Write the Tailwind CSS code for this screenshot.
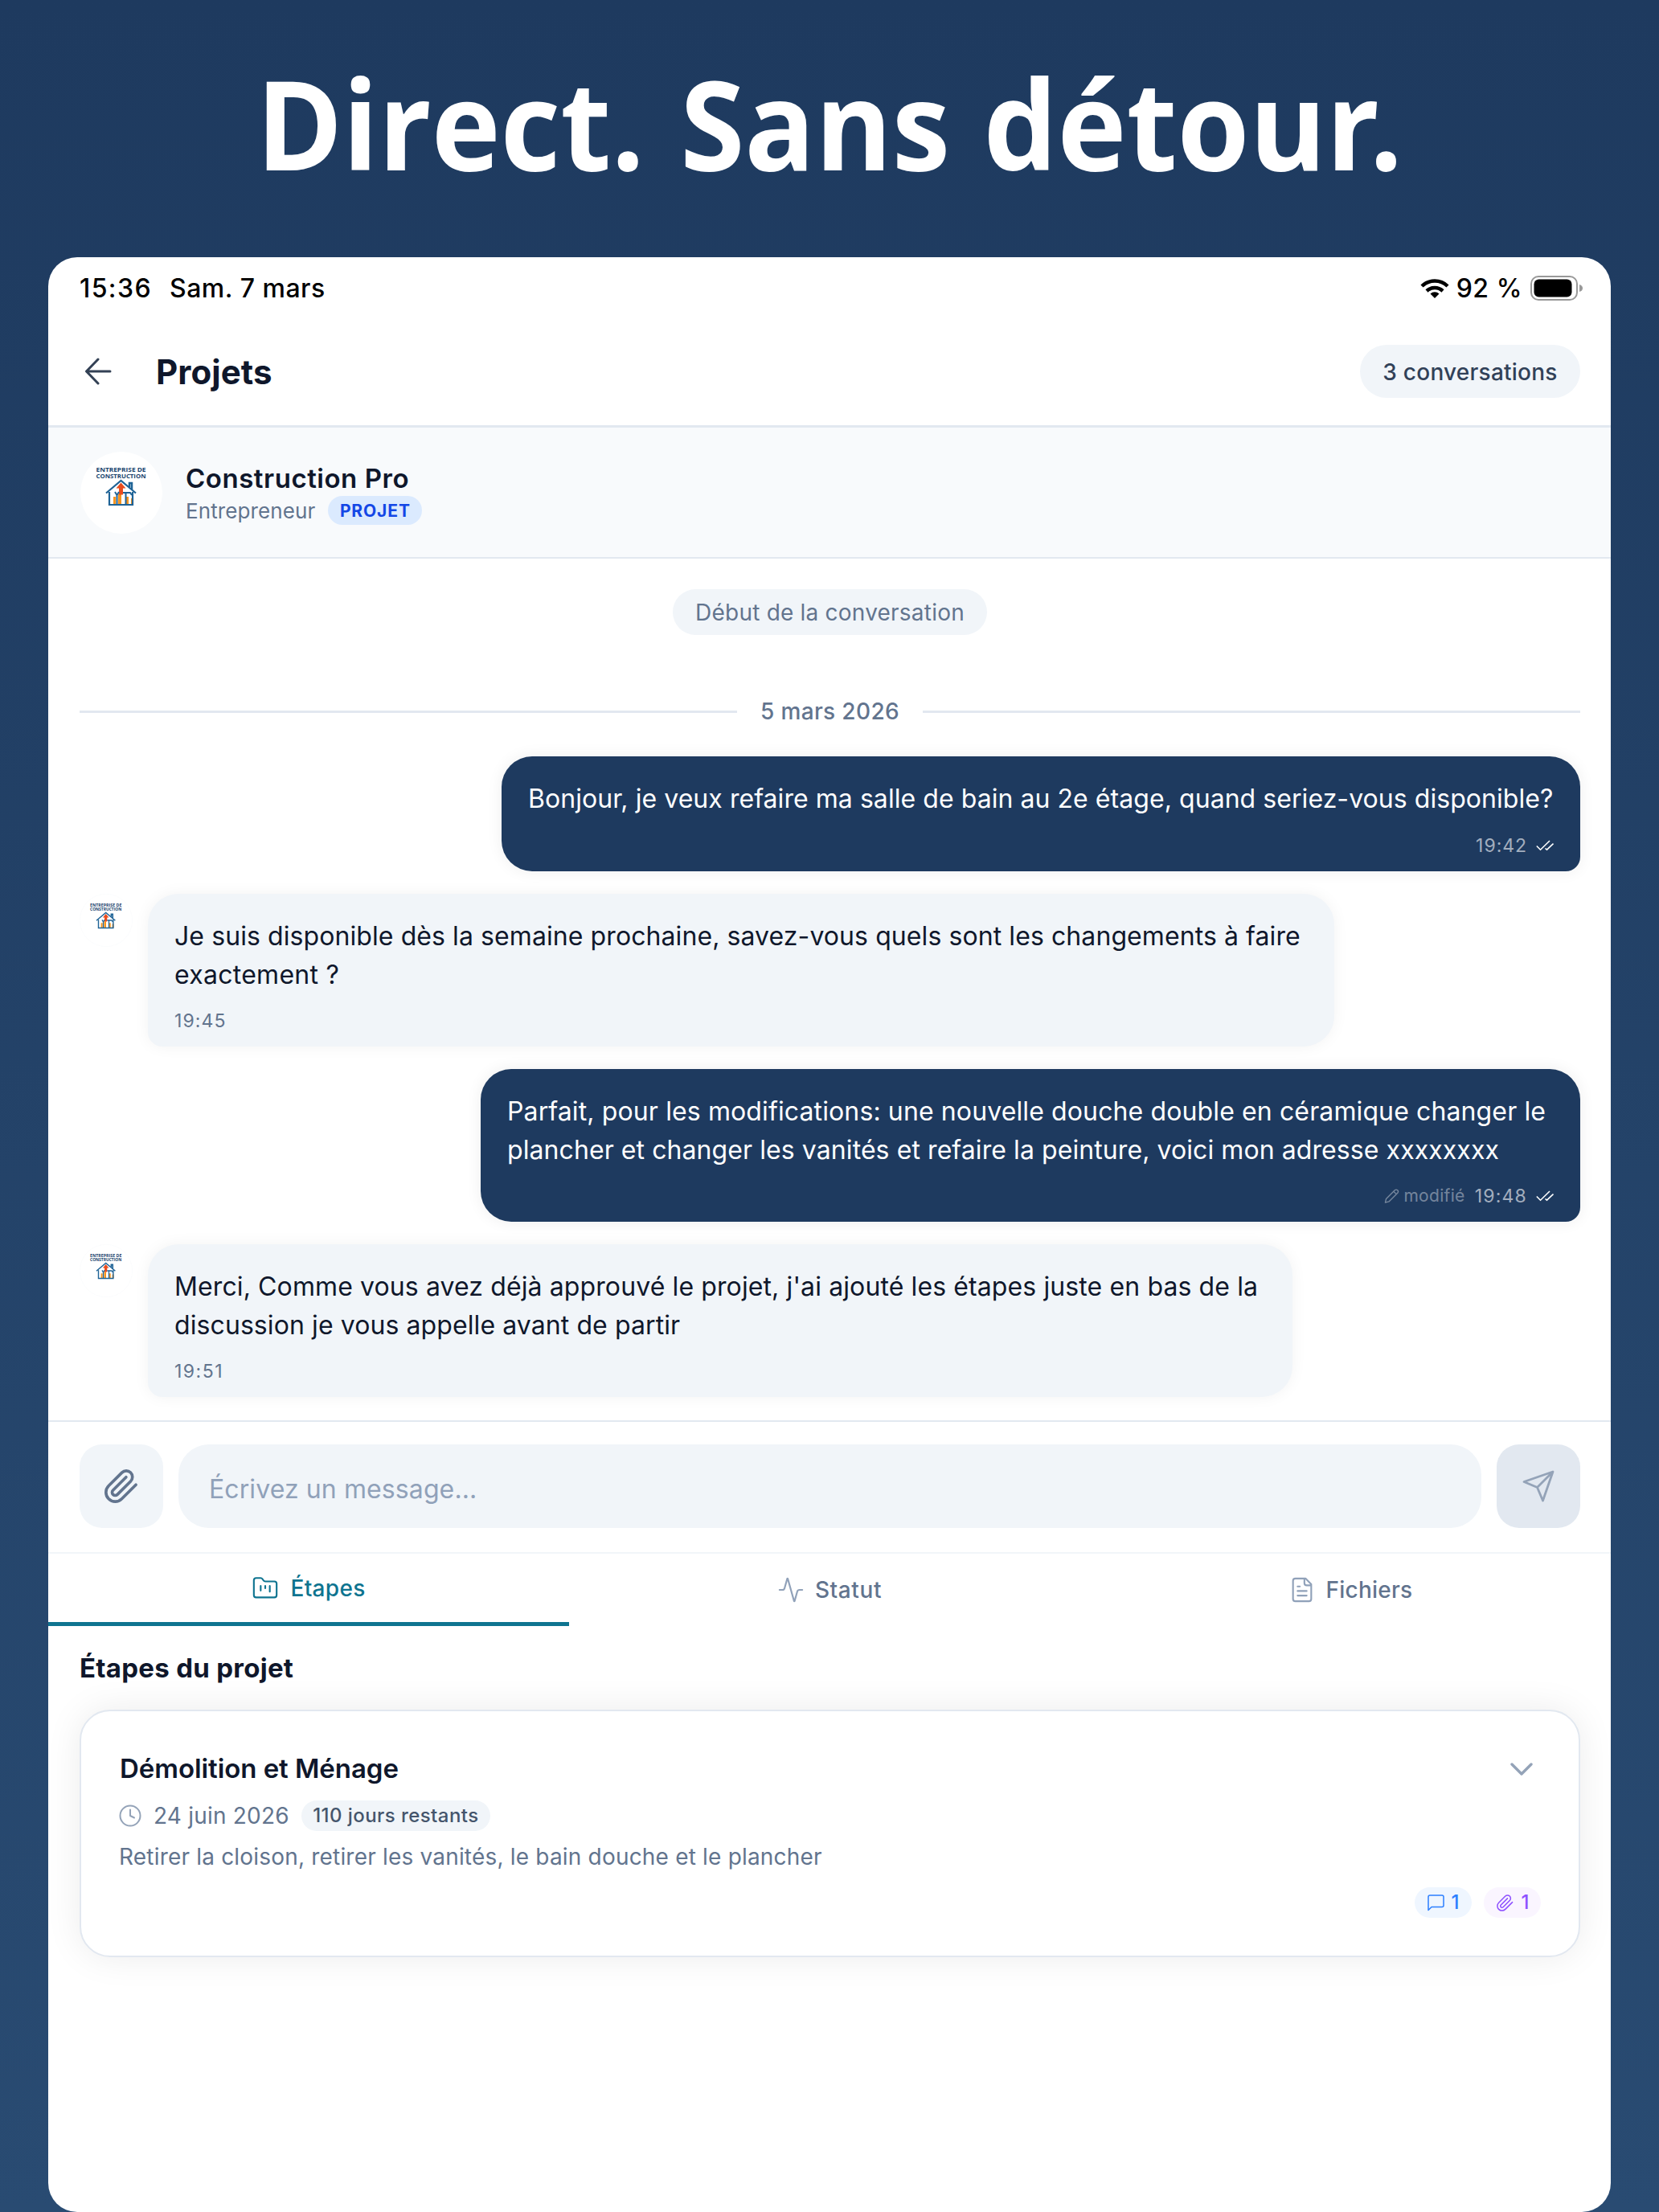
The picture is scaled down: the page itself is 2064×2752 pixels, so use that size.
<!DOCTYPE html>
<html lang="fr">
<head>
  <meta charset="UTF-8" />
  <meta name="viewport" content="width=device-width, initial-scale=1.0" />
  <title>Projets | Conversation</title>
  <script src="https://cdn.jsdelivr.net/npm/@tailwindcss/browser@4"></script>
</head>
<body class="w-[2064px] h-[2752px] overflow-hidden bg-linear-to-b from-[#1e3a5f] to-[#294b72] font-[Inter,sans-serif] text-slate-900">

<!-- Shared symbols -->
<svg class="hidden">
  <symbol id="logo" viewBox="0 0 104 104">
    <circle cx="52" cy="52" r="51.5" fill="#fff" stroke="#f8fafc" />
    <g font-family="Open Sans, sans-serif" font-weight="700" font-size="7.6" fill="#17426b" text-anchor="middle">
      <text x="51.5" y="25.5" textLength="62" lengthAdjust="spacingAndGlyphs">ENTREPRISE DE</text>
      <text x="51.5" y="33.5" textLength="62" lengthAdjust="spacingAndGlyphs">CONSTRUCTION</text>
    </g>
    <path d="M62 45v-5h3v8" fill="none" stroke="#1f6396" stroke-width="2.5" />
    <path d="M42 66v-9h3v9zM48 66v-12h4v12zM58 66v-9h3v9zM64 66v-7h3v7z" fill="#f7941e" />
    <path d="M51.5 39.5l6 7h-3.5v8h-5v-8h-3.5z" fill="#ea4c1d" />
    <path d="M33 52.5L51.5 37L70 52.5M37 51v16h29v-16" fill="none" stroke="#1f6396" stroke-width="2.2" />
    <path d="M46.5 66V55l-2.5-4M46.5 55l2.5-4M57.5 66V52M54 52h9l2 3" fill="none" stroke="#1f6396" stroke-width="2" />
  </symbol>
  <symbol id="clip" viewBox="0 0 24 24">
    <path d="m21.44 11.05-9.19 9.19a6 6 0 0 1-8.49-8.49l8.57-8.57A4 4 0 1 1 18 8.84l-8.59 8.57a2 2 0 0 1-2.83-2.83l8.49-8.48" fill="none" stroke="currentColor" stroke-linecap="round" stroke-linejoin="round" />
  </symbol>
  <symbol id="checks" viewBox="0 0 22 14">
    <path d="M.8 7.5L5.5 12.2L17 1M11.5 10.5L13.5 12.2L21.5 4.5" fill="none" stroke="#fff" stroke-width="1.6" />
  </symbol>
</svg>

<h1 class="h-[320px] pt-[47px] text-center text-[154px] leading-[210px] font-bold font-['Open_Sans',sans-serif] text-white whitespace-nowrap scale-x-[0.944]">Direct. <span class="ml-[7px]">Sans</span> <span class="ml-[4px]">détou<span class="tracking-[-13px]">r</span>.</span></h1>

<main class="mx-[60px] h-[2432px] rounded-[36px] bg-white overflow-hidden whitespace-nowrap">

  <!-- Status bar -->
  <div class="flex items-center h-[78px] pl-[39px] pr-[34px] text-[32px] font-medium text-black">
    <span class="tracking-[1.4px]">15:36</span>
    <span class="ml-[22px] tracking-[0.5px]">Sam. 7 mars</span>
    <svg class="ml-auto w-[36px] h-[26px]" viewBox="0 0 36 26">
      <g fill="none" stroke="#000" stroke-width="4.5">
        <path d="M2 10a23 23 0 0 1 32 0" />
        <path d="M8 16a14.5 14.5 0 0 1 20 0" />
      </g>
      <path d="M18 25l-5.5-5.5a8 8 0 0 1 11 0z" />
    </svg>
    <span class="ml-[9px] tracking-[0.53px]">92 %</span>
    <svg class="ml-[10px] w-[66px] h-[32px]" viewBox="0 0 66 32">
      <rect x="1" y="1" width="57" height="29" rx="9" fill="none" stroke="#999" stroke-width="2" />
      <rect x="4.5" y="4.5" width="47" height="22" rx="6" />
      <path d="M61 11q4 1 4 4.5t-4 4.5z" fill="#999" />
    </svg>
  </div>

  <!-- Header -->
  <header class="flex items-center h-[134px] px-[38px] pb-[3px] border-b-[3px] border-slate-200">
    <svg class="ml-[7px] w-[34px] h-[34px]" viewBox="0 0 34 34" fill="none" stroke="#334155" stroke-width="3" stroke-linecap="round" stroke-linejoin="round">
      <path d="M32 17H3M17 2L2.5 17L17 32" />
    </svg>
    <h2 class="ml-[55px] pt-px text-[42px] font-bold tracking-[0.08px]">Projets</h2>
    <span class="ml-auto w-[274px] h-[66px] rounded-full bg-slate-100 flex items-center justify-center pt-[2px] text-[28px] font-medium text-slate-700 tracking-[0.24px]">3 conversations</span>
  </header>

  <!-- Contact -->
  <section class="flex items-center h-[163px] pl-[39px] bg-slate-50 border-b-[2px] border-slate-200">
    <svg class="w-[104px] h-[104px]"><use href="#logo" /></svg>
    <div class="ml-[28px] pt-[3px]">
      <div class="text-[33px] leading-[42px] font-semibold tracking-[0.53px]">Construction Pro</div>
      <div class="flex items-center text-[26px] leading-[39px] text-slate-500">
        <span class="tracking-[0.1px]">Entrepreneur</span>
        <span class="ml-[16px] w-[117px] h-[36px] rounded-full bg-blue-100 flex items-center justify-center text-[21px] font-bold text-blue-700 tracking-[0.88px]">PROJET</span>
      </div>
    </div>
  </section>

  <!-- Messages -->
  <section class="flex flex-col h-[1074px] pl-[39px] pr-[38px] border-b-[2px] border-slate-200">
    <div class="mt-[38px] self-center w-[391px] h-[57px] rounded-full bg-slate-100 flex items-center justify-center pt-px text-[28px] text-slate-500 tracking-[0.21px]">Début de la conversation</div>
    <div class="mt-[76px] flex items-center gap-[29px] h-[38px] text-[28px] font-medium text-slate-500">
      <div class="flex-1 h-[3px] bg-slate-200"></div>
      <span class="tracking-[0.35px]">5 mars 2026</span>
      <div class="flex-1 h-[3px] bg-slate-200"></div>
    </div>

    <div class="mt-[37px] self-end w-[1342px] h-[143px] px-[33px] pt-[29px] rounded-[38px] rounded-br-[18px] bg-[#1e3a5f] shadow-[0_0_19px_rgba(0,0,0,0.07)] text-[32px] leading-[47.5px] text-white">
      <p class="tracking-[0.055px]">Bonjour, je veux refaire ma salle de bain au 2e étage, quand seriez-vous disponible?</p>
      <div class="mt-[19px] flex items-center justify-end text-[23px] leading-[30px] text-white/60">
        <span class="tracking-[0.95px]">19:42</span>
        <svg class="ml-[11px] w-[22px] h-[14px]"><use href="#checks" /></svg>
      </div>
    </div>

    <div class="mt-[28px] flex">
      <svg class="w-[66px] h-[66px]"><use href="#logo" /></svg>
      <div class="ml-[19px] w-[1476px] h-[190px] px-[33px] pt-[29px] rounded-[38px] rounded-bl-[18px] bg-slate-100 shadow-[0_0_19px_rgba(0,0,0,0.05)] text-[32px] leading-[47.5px]">
        <p class="tracking-[0.084px]">Je suis disponible dès la semaine prochaine, savez-vous quels sont les changements à faire<br /><span class="tracking-[0.27px]">exactement ?</span></p>
        <div class="mt-[19px] text-[23px] leading-[30px] text-slate-500 tracking-[1.1px]">19:45</div>
      </div>
    </div>

    <div class="mt-[28px] self-end w-[1368px] h-[190px] px-[33px] pt-[29px] rounded-[38px] rounded-br-[18px] bg-[#1e3a5f] shadow-[0_0_19px_rgba(0,0,0,0.07)] text-[32px] leading-[47.5px] text-white">
      <p class="tracking-[0.12px]">Parfait, pour les modifications: une nouvelle douche double en céramique changer le<br /><span class="tracking-[0.08px]">plancher et changer les vanités et refaire la peinture, voici mon adresse xxxxxxxx</span></p>
      <div class="mt-[19px] flex items-center justify-end text-[23px] leading-[30px] text-white/60">
        <svg class="w-[19px] h-[20px] text-white/40" viewBox="0 0 20 20" fill="none" stroke="currentColor" stroke-width="1.4" stroke-linejoin="round">
          <path d="M1.5 18.5l1.2-4.8L14 2.4a2.5 2.5 0 0 1 3.6 3.6L6.3 17.3zM12.5 4l3.5 3.5" />
        </svg>
        <span class="ml-[5px] text-[21px] text-white/40 tracking-[0.32px]">modifié</span>
        <span class="ml-[12px] tracking-[1.2px]">19:48</span>
        <svg class="ml-[11px] w-[22px] h-[14px]"><use href="#checks" /></svg>
      </div>
    </div>

    <div class="mt-[28px] flex">
      <svg class="w-[66px] h-[66px]"><use href="#logo" /></svg>
      <div class="ml-[19px] w-[1424px] h-[190px] px-[33px] pt-[29px] rounded-[38px] rounded-bl-[18px] bg-slate-100 shadow-[0_0_19px_rgba(0,0,0,0.05)] text-[32px] leading-[47.5px]">
        <p class="tracking-[0.11px]">Merci, Comme vous avez déjà approuvé le projet, j'ai ajouté les étapes juste en bas de la<br /><span class="tracking-[0.09px]">discussion je vous appelle avant de partir</span></p>
        <div class="mt-[19px] text-[23px] leading-[30px] text-slate-500 tracking-[1.5px]">19:51</div>
      </div>
    </div>
  </section>

  <!-- Composer -->
  <section class="flex items-start h-[164px] pt-[28px] pl-[39px] pr-[38px] border-b-[2px] border-slate-100">
    <button class="w-[104px] h-[104px] rounded-[28px] bg-slate-100 flex items-center justify-center text-slate-500">
      <svg class="w-[46px] h-[46px]" stroke-width="1.9"><use href="#clip" /></svg>
    </button>
    <div class="ml-[19px] w-[1621px] h-[104px] pl-[38px] pt-[8px] rounded-[38px] bg-slate-100 flex items-center text-[32px] text-slate-400 tracking-[0.1px]">Écrivez un message...</div>
    <button class="ml-auto w-[104px] h-[104px] rounded-[28px] bg-slate-200 flex items-center justify-center">
      <svg class="w-[40px] h-[40px]" viewBox="0 0 40 40" fill="none" stroke="#94a3b8" stroke-width="2.8" stroke-linejoin="round" stroke-linecap="round">
        <path d="M38 2L2 14.5L18.5 21.5L25.5 38zM38 2L18.5 21.5" />
      </svg>
    </button>
  </section>

  <!-- Tabs -->
  <nav class="grid grid-cols-3 h-[90px] text-[28px] font-medium text-slate-500">
    <div class="flex items-center justify-center border-b-[5px] border-[#0e7490] text-[#0e7490]">
      <svg class="w-[34px] h-[34px]" viewBox="0 0 24 24" fill="none" stroke="currentColor" stroke-width="1.5" stroke-linecap="round" stroke-linejoin="round">
        <path d="M4 20h16a2 2 0 0 0 2-2V8a2 2 0 0 0-2-2h-7.93a2 2 0 0 1-1.66-.9l-.82-1.2A2 2 0 0 0 7.93 3H4a2 2 0 0 0-2 2v13c0 1.1.9 2 2 2ZM8 10v4M12 10v2M16 10v5" />
      </svg>
      <span class="ml-[14px] tracking-[0.3px]">Étapes</span>
    </div>
    <div class="flex items-center justify-center">
      <svg class="w-[34px] h-[34px] text-slate-400" viewBox="0 0 24 24" fill="none" stroke="currentColor" stroke-width="1.5" stroke-linecap="round" stroke-linejoin="round">
        <path d="M22 12h-2.48a2 2 0 0 0-1.93 1.46l-2.35 8.36a.25.25 0 0 1-.48 0L9.24 2.18a.25.25 0 0 0-.48 0l-2.35 8.36A2 2 0 0 1 4.49 12H2" />
      </svg>
      <span class="ml-[13px] tracking-[0.6px]">Statut</span>
    </div>
    <div class="flex items-center justify-center">
      <svg class="w-[34px] h-[34px] text-slate-400" viewBox="0 0 24 24" fill="none" stroke="currentColor" stroke-width="1.5" stroke-linecap="round" stroke-linejoin="round">
        <path d="M15 2H6a2 2 0 0 0-2 2v16a2 2 0 0 0 2 2h12a2 2 0 0 0 2-2V7ZM14 2v4a2 2 0 0 0 2 2h4M10 9H8M16 13H8M16 17H8" />
      </svg>
      <span class="ml-[13px] tracking-[0.23px]">Fichiers</span>
    </div>
  </nav>

  <!-- Project steps -->
  <section class="pl-[39px] pr-[38px] pt-[29px]">
    <h3 class="text-[33px] leading-[46px] font-bold tracking-[0.28px]">Étapes du projet</h3>
    <article class="mt-[29px] h-[308px] px-[47px] pt-[46px] rounded-[38px] border-[2px] border-slate-200 bg-white shadow-[0_0_45px_rgba(0,0,0,0.08)]">
      <div class="flex items-center justify-between h-[52px]">
        <h4 class="pl-px text-[33px] font-semibold tracking-[-0.06px]">Démolition et Ménage</h4>
        <svg class="mr-[10px] w-[28px] h-[18px]" viewBox="0 0 28 18" fill="none" stroke="#94a3b8" stroke-width="3.4" stroke-linecap="round" stroke-linejoin="round">
          <path d="M2 3l12 12L26 3" />
        </svg>
      </div>
      <div class="mt-[13px] flex items-center h-[38px] text-[28px] text-slate-500">
        <svg class="w-[28px] h-[28px]" viewBox="0 0 28 28" fill="none" stroke="#94a3b8" stroke-width="2" stroke-linecap="round" stroke-linejoin="round">
          <circle cx="14" cy="14" r="12.5" /><path d="M14 6.5V14l5 2.5" />
        </svg>
        <span class="ml-[15px] tracking-[0.21px]">24 juin 2026</span>
        <span class="ml-[15px] w-[235px] h-[38px] rounded-full bg-slate-100 flex items-center justify-center text-[24px] font-medium text-slate-600 tracking-[0.44px]">110 jours restants</span>
      </div>
      <p class="mt-[11px] text-[28px] leading-[42px] text-slate-500 tracking-[0.19px]">Retirer la cloison, retirer les vanités, le bain douche et le plancher</p>
      <div class="mt-[17px] flex justify-end gap-[15px] text-[24px] font-medium">
        <span class="w-[71px] h-[38px] rounded-full bg-blue-50 flex items-center justify-center gap-[9px] text-blue-500">
          <svg class="w-[21px] h-[21px]" viewBox="0 0 21 21" fill="none" stroke="currentColor" stroke-width="1.5" stroke-linejoin="round">
            <path d="M1 19.5V3a2 2 0 0 1 2-2h15a2 2 0 0 1 2 2v10.5a2 2 0 0 1-2 2H5z" />
          </svg>
          <span>1</span>
        </span>
        <span class="w-[71px] h-[38px] rounded-full bg-purple-50 flex items-center justify-center gap-[9px] text-violet-500">
          <svg class="w-[23px] h-[23px]" stroke-width="1.6"><use href="#clip" /></svg>
          <span>1</span>
        </span>
      </div>
    </article>
  </section>
</main>

</body>
</html>
